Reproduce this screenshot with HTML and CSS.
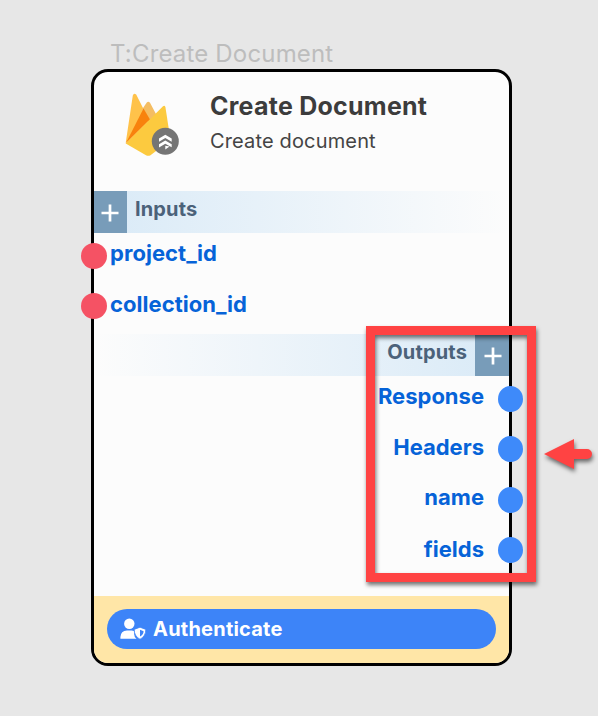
FILE: index.html
```
<!DOCTYPE html>
<html lang="en">
<head>
<meta charset="utf-8">
<title>Create Document</title>
<link rel="stylesheet" href="styles.css">
</head>
<body>
<main class="canvas">
  <div class="node-label">T:Create Document</div>
  <section class="node">
    <header class="head">
      <svg class="logo" viewBox="0 0 56 66" width="56" height="66">
        <path fill="#ffc24a" d="M1.7 51 8.8 3.6Q9.8 .3 12.2 2.6L19 16 25.500 27Z"/>
        <path fill="#f4bd62" d="M17.700 18 22.600 10.800Q24.300 8.600 26 10.800L32 22 24 30Z"/>
        <path fill="#f8820d" d="M1.700 51.500 19.500 16.500 26 27.500Z"/>
        <path fill="#fcca3f" d="M1.700 51.500 39 14.200Q40.600 13 41.400 15L46.500 48 26.500 63.200Q24.300 64.300 22 63.200Z"/>
        <circle cx="41.300" cy="49.300" r="13.500" fill="#757575"/>
        <path fill="#fff" d="M35 46.500 41.300 42.800 47.700 46.500V49.700L41.300 46 35 49.700ZM35 52.300 41.300 48.600 47.700 52.300V55.300L41.300 51.800 35 55.500ZM41.300 53.800 45.500 54.500 41.300 57.500Z"/>
      </svg>
      <div class="titles">
        <h1>Create Document</h1>
        <p>Create document</p>
      </div>
    </header>
    <div class="bar inputs">
      <span class="plus"><svg viewBox="0 0 18 18" width="18" height="18"><path d="M9 .5V17.500M.5 9H17.500"/></svg></span>
      <span class="bar-title">Inputs</span>
    </div>
    <ul class="ports in">
      <li><i class="dot"></i><span>project_id</span></li>
      <li><i class="dot"></i><span>collection_id</span></li>
    </ul>
    <div class="bar outputs">
      <span class="bar-title">Outputs</span>
      <span class="plus"><svg viewBox="0 0 18 18" width="18" height="18"><path d="M9 .5V17.500M.5 9H17.500"/></svg></span>
    </div>
    <ul class="ports out">
      <li><span>Response</span><i class="dot"></i></li>
      <li><span>Headers</span><i class="dot"></i></li>
      <li><span>name</span><i class="dot"></i></li>
      <li><span>fields</span><i class="dot"></i></li>
    </ul>
    <footer class="foot">
      <div class="auth">
        <svg viewBox="0 0 26 22" width="26" height="22">
          <circle cx="9.300" cy="5.800" r="5.200" fill="#fff"/>
          <path fill="#fff" d="M.4 20.800V19Q.7 12.700 7 12.400H11.600Q13 12.500 14 13V15.500Q14.200 19 16.500 20.800Z"/>
          <path class="shield" d="M20 9.200 25.800 11.400Q26 18 20 21.300 14 18 14.200 11.400Z"/>
          <path fill="#3d84f8" d="M20 11.800V18.600Q23.600 16.500 23.600 13.200Z"/>
        </svg>
        <span>Authenticate</span>
      </div>
    </footer>
  </section>
  <div class="highlight"></div>
  <svg class="arrow" viewBox="0 0 54 38" width="54" height="38">
    <path fill="#ff4343" d="M2 17 32 2V12H45A5 5 0 0 1 45 22H32V32Z"/>
  </svg>
</main>
</body>
</html>
```

FILE: styles.css
```
* { box-sizing: border-box; }
body {
  margin: 0;
  background: #e7e7e7;
  font-family: Inter, "Liberation Sans", sans-serif;
}
.canvas {
  position: relative;
  width: 598px;
  height: 716px;
  overflow: hidden;
  padding: 39px 0 0 91px;
}
.node-label {
  height: 30px;
  padding-left: 19px;
  font-size: 24px;
  line-height: 30px;
  letter-spacing: .17px;
  color: #bdbdbd;
  white-space: nowrap;
}
.node {
  width: 421px;
  height: 597px;
  border: 3px solid #000;
  border-radius: 17px;
  background: #fcfcfc;
}
.head {
  display: flex;
  height: 119px;
  padding: 20px 0 0 30px;
}
.logo { flex: none; }
.titles { padding-left: 30px; white-space: nowrap; }
h1 {
  margin: 0;
  font-size: 25px;
  line-height: 29px;
  letter-spacing: .25px;
  font-weight: 700;
  color: #3c3c3c;
}
p {
  margin: 8px 0 0;
  font-size: 20px;
  line-height: 24px;
  letter-spacing: .15px;
  color: #444;
}
.bar { display: flex; height: 42px; }
.inputs { height: 41.500px; background: linear-gradient(90deg, #d9eaf7, #fcfcfc); }
.outputs { justify-content: flex-end; background: linear-gradient(270deg, #d9eaf7, #fcfcfc); }
.plus {
  display: flex;
  align-items: center;
  justify-content: center;
  width: 33px;
  padding: 3px 1px 0 0;
  background: #789cb9;
}
.outputs .plus { width: 34px; padding: 2px 0 0 1px; }
.plus path { fill: none; stroke: #fff; stroke-width: 2.700; }
.bar-title {
  padding: 0 8px;
  font-size: 20px;
  line-height: 37px;
  letter-spacing: .15px;
  font-weight: 700;
  color: #4b627a;
}
.ports {
  list-style: none;
  margin: 0;
  padding: 0;
  font-size: 22px;
  font-weight: 700;
  color: #0663d8;
}
.ports li { display: flex; align-items: center; height: 50.500px; }
.ports span { line-height: 28px; }
.dot {
  flex: none;
  width: 26px;
  height: 26px;
  border-radius: 50%;
}
.in { height: 101px; letter-spacing: .05px; }
.in li { padding-bottom: 6px; }
.in .dot { margin: 2px 3px 0 -13px; background: #f55264; }
.in span { margin-bottom: 3px; }
.out { height: 220px; }
.out li { justify-content: flex-end; padding-bottom: 4px; }
.out .dot { width: 25px; margin: 0 -14px 0 14px; background: #3e8afa; }
.out span { margin-bottom: 5px; }
.out li:last-child span { margin-bottom: 3px; }
.foot {
  height: 67.500px;
  padding: 13px 13px 14px;
  border-radius: 0 0 14px 14px;
  background: #ffe6a7;
}
.auth {
  display: flex;
  align-items: center;
  height: 40.500px;
  padding-left: 13px;
  border-radius: 20px;
  background: #3d84f8;
  color: #fff;
  font-size: 20px;
  letter-spacing: .22px;
  font-weight: 700;
}
.auth span { padding-left: 7px; }
.shield { fill: #fff; stroke: #3d84f8; stroke-width: .8; }
.highlight {
  position: absolute;
  left: 366px;
  top: 326px;
  width: 170px;
  height: 256px;
  border: 9px solid #ff4343;
  filter: drop-shadow(1px 3px 2px rgba(0, 0, 0, .55));
}
.arrow {
  position: absolute;
  left: 542px;
  top: 437px;
  filter: drop-shadow(1px 3px 2px rgba(0, 0, 0, .55));
}
```
